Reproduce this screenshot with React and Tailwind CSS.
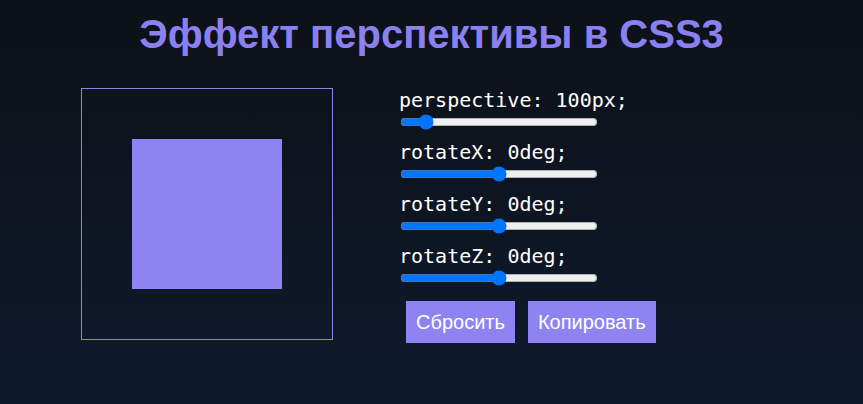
import { useState } from 'react';

const controls = [
  { key: 'perspective', unit: 'px', min: 0, max: 1000, initial: 100 },
  { key: 'rotateX', unit: 'deg', min: -180, max: 180, initial: 0 },
  { key: 'rotateY', unit: 'deg', min: -180, max: 180, initial: 0 },
  { key: 'rotateZ', unit: 'deg', min: -180, max: 180, initial: 0 },
];

const initialValues = Object.fromEntries(controls.map((c) => [c.key, c.initial]));

export default function App() {
  const [values, setValues] = useState(initialValues);

  const transform = `perspective(${values.perspective}px) rotateX(${values.rotateX}deg) rotateY(${values.rotateY}deg) rotateZ(${values.rotateZ}deg)`;

  return (
    <div className="min-h-[404px] w-full bg-gradient-to-b from-[#0d1118] to-[#0e1a2c] font-['Liberation_Sans',Arial,sans-serif]">
      <h1 className="pt-[11px] text-center text-[40px] font-bold leading-[46px] text-[#8b80f0]">
        Эффект перспективы в CSS3
      </h1>
      <div className="mt-[31px] flex items-start pl-[81px]">
        <div className="flex h-[252px] w-[252px] items-center justify-center border border-[#8a86e4]">
          <div className="h-[150px] w-[150px] bg-[#8f83f2]" style={{ transform }} />
        </div>
        <div className="ml-[66px] flex flex-col">
          {controls.map((c) => (
            <div key={c.key} className="mb-[10px] flex flex-col">
              <label className="font-['DejaVu_Sans_Mono',monospace] text-[20px] leading-[24px] text-white">
                {c.key}: {values[c.key]}
                {c.unit};
              </label>
              <input
                type="range"
                min={c.min}
                max={c.max}
                value={values[c.key]}
                onChange={(e) => setValues((prev) => ({ ...prev, [c.key]: Number(e.target.value) }))}
                className="ml-px mt-[2px] block h-4 w-[198px]"
              />
            </div>
          ))}
          <div className="ml-[7px] mt-[5px] flex gap-[13px]">
            <button
              onClick={() => setValues(initialValues)}
              className="h-[42px] bg-[#8f83f2] px-[10px] text-[20px] text-white"
            >
              Сбросить
            </button>
            <button className="h-[42px] bg-[#8f83f2] px-[10px] text-[20px] text-white">
              Копировать
            </button>
          </div>
        </div>
      </div>
    </div>
  );
}
